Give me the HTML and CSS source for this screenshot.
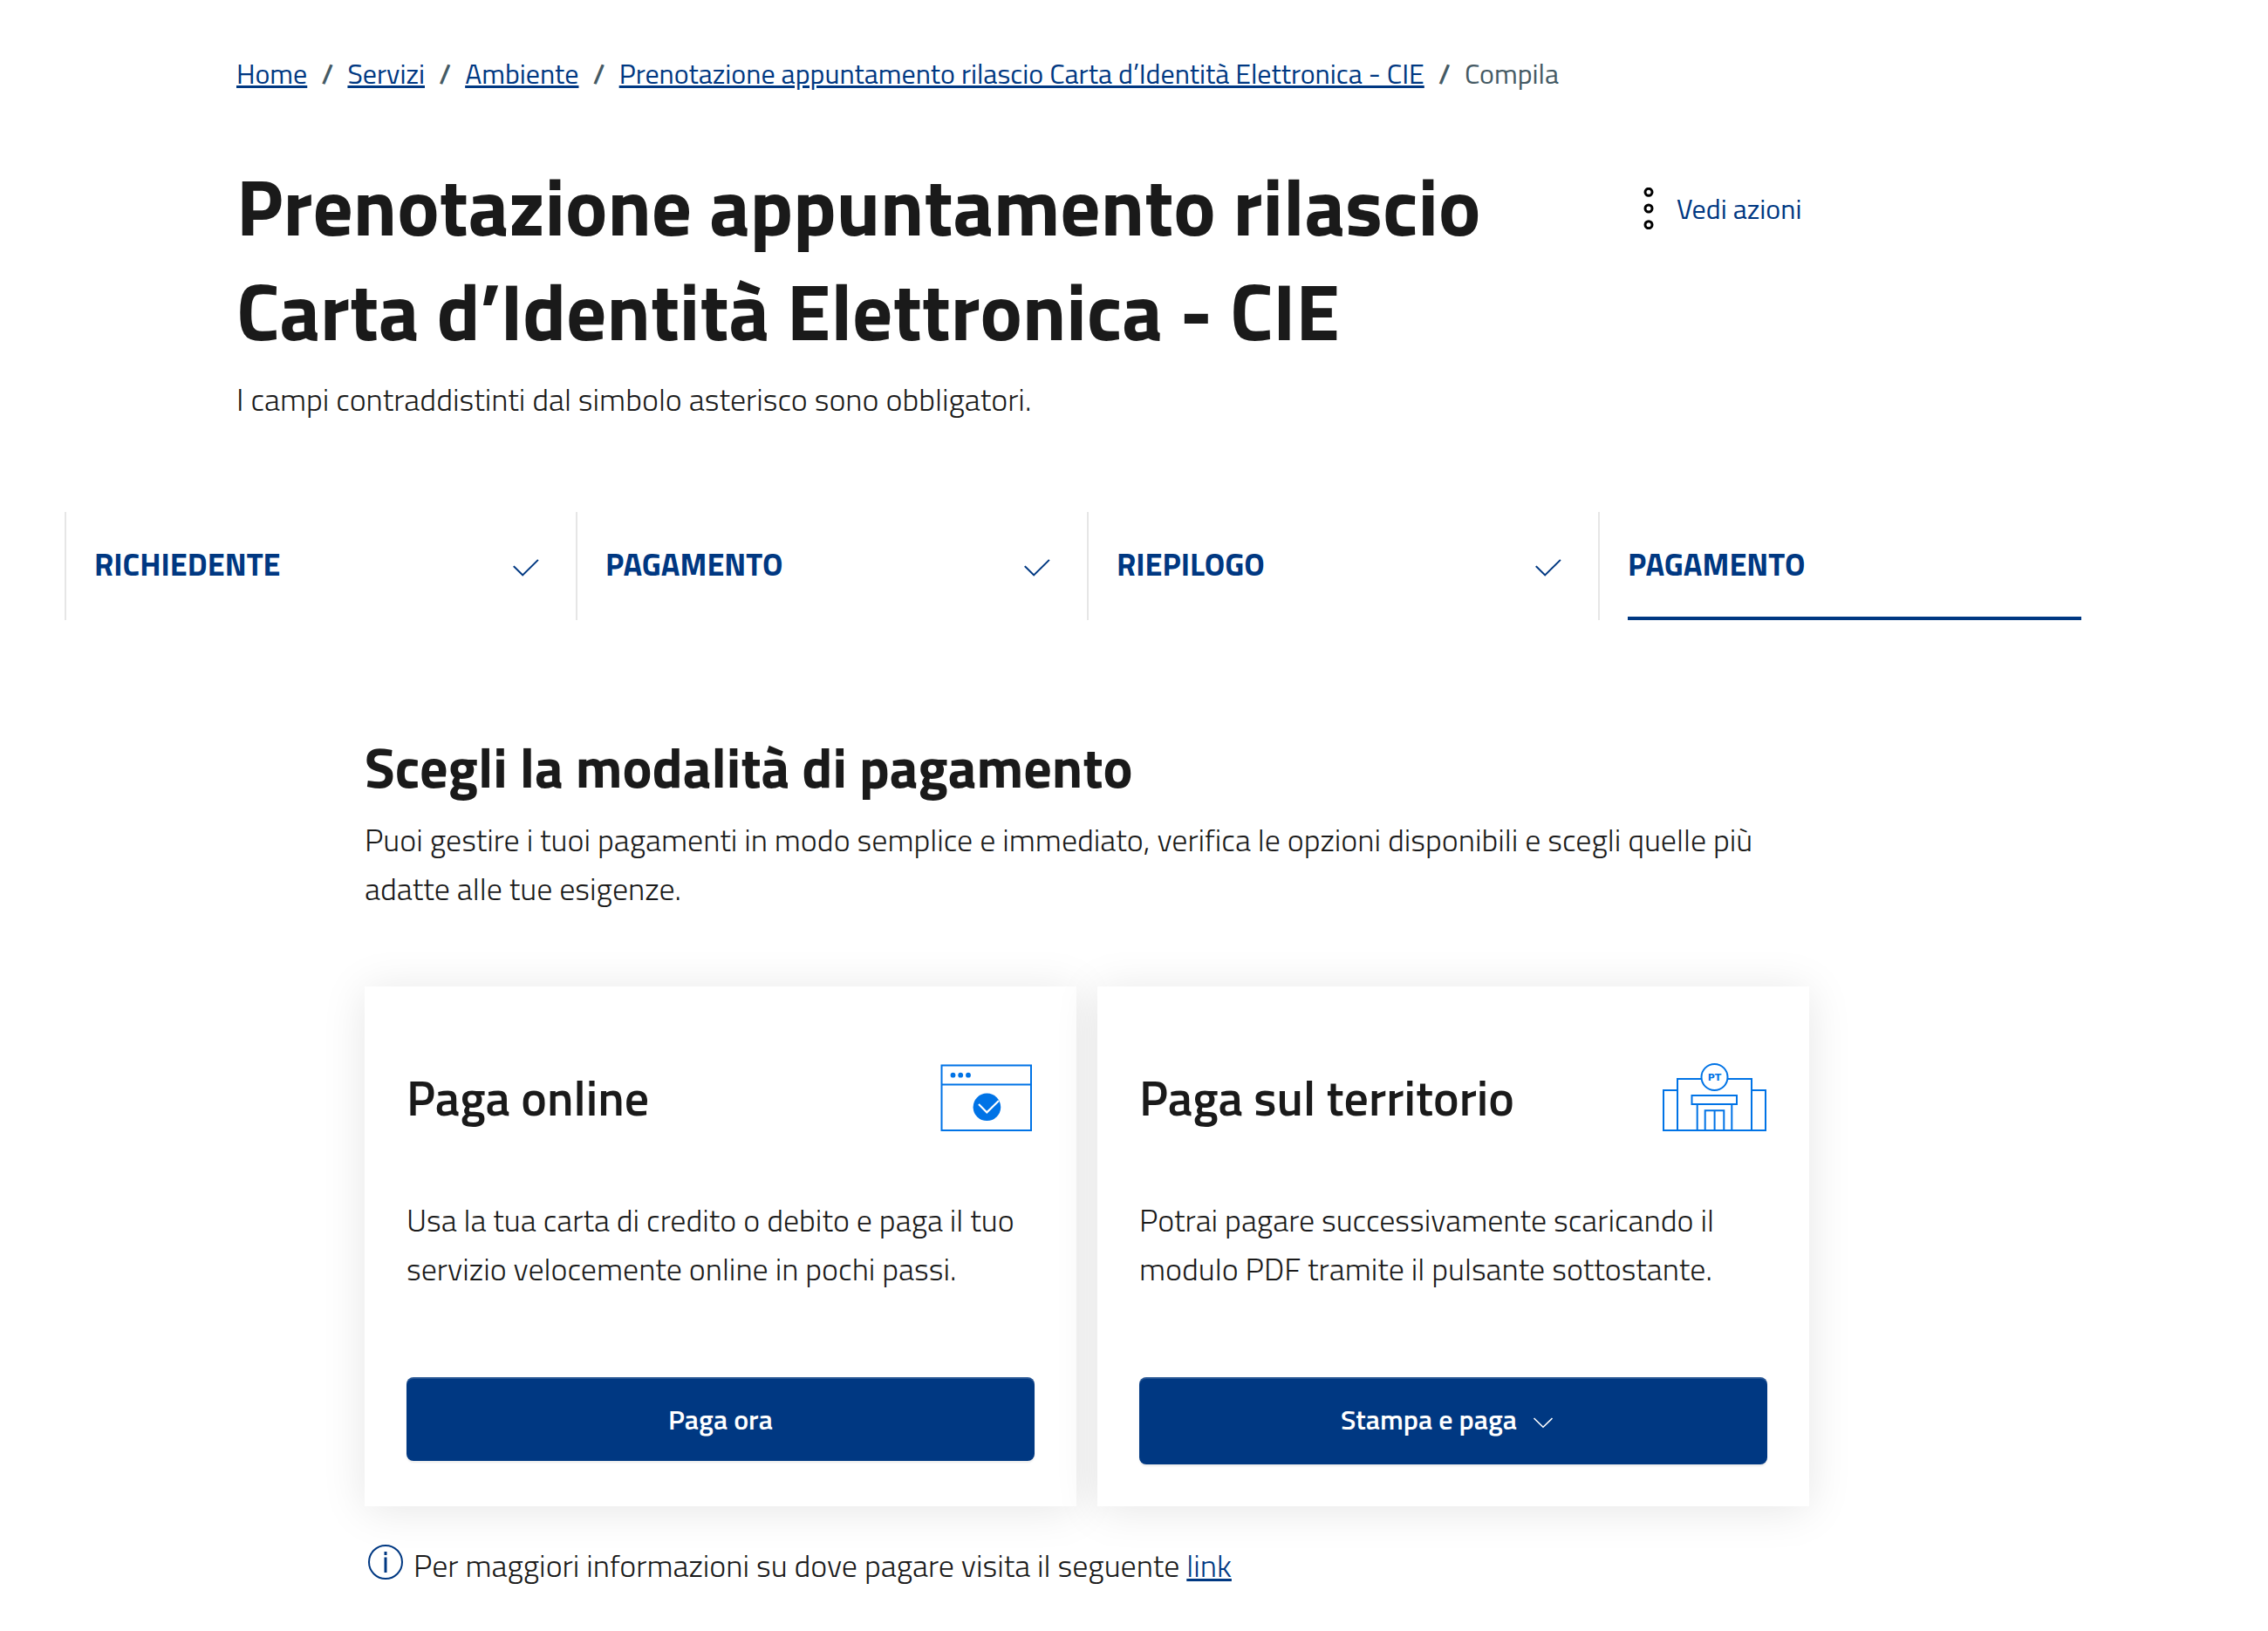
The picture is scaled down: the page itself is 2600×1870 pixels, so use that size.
FILE: index.html
```html
<!DOCTYPE html>
<html lang="it">
<head>
  <meta charset="utf-8">
  <meta name="viewport" content="width=device-width, initial-scale=1">
  <title>Prenotazione appuntamento rilascio Carta d’Identità Elettronica - CIE</title>
  <link rel="stylesheet" href="styles.css">
</head>
<body>
  <header class="intro">
    <nav aria-label="Percorso di navigazione">
      <ol class="breadcrumb">
        <li class="crumb"><a class="link" href="#">Home</a></li>
        <li class="crumb"><a class="link" href="#">Servizi</a></li>
        <li class="crumb"><a class="link" href="#">Ambiente</a></li>
        <li class="crumb"><a class="link" href="#">Prenotazione appuntamento rilascio Carta d’Identità Elettronica - CIE</a></li>
        <li class="crumb crumb-current" aria-current="page">Compila</li>
      </ol>
    </nav>
    <div class="heading">
      <div class="heading-text">
        <h1 class="title">Prenotazione appuntamento rilascio Carta d’Identità Elettronica - CIE</h1>
        <p class="text">I campi contraddistinti dal simbolo asterisco sono obbligatori.</p>
      </div>
      <button class="actions" type="button">
        <svg class="icon" viewBox="0 0 48 48" aria-hidden="true">
          <g fill="none" stroke="#000" stroke-width="3">
            <circle cx="24" cy="5.3" r="4"/><circle cx="24" cy="24" r="4"/><circle cx="24" cy="42.7" r="4"/>
          </g>
        </svg>
        <span>Vedi azioni</span>
      </button>
    </div>
  </header>

  <ol class="stepper">
    <li class="step">
      <span>RICHIEDENTE</span>
      <svg class="icon" viewBox="0 0 24 24" role="img" aria-label="Completato"><path fill="#003882" d="M9.6 16.9 4 11.4l.8-.7 4.8 4.8 8.5-8.4.7.7-9.2 9.1z"/></svg>
    </li>
    <li class="step">
      <span>PAGAMENTO</span>
      <svg class="icon" viewBox="0 0 24 24" role="img" aria-label="Completato"><path fill="#003882" d="M9.6 16.9 4 11.4l.8-.7 4.8 4.8 8.5-8.4.7.7-9.2 9.1z"/></svg>
    </li>
    <li class="step">
      <span>RIEPILOGO</span>
      <svg class="icon" viewBox="0 0 24 24" role="img" aria-label="Completato"><path fill="#003882" d="M9.6 16.9 4 11.4l.8-.7 4.8 4.8 8.5-8.4.7.7-9.2 9.1z"/></svg>
    </li>
    <li class="step step-active" aria-current="step">
      <span>PAGAMENTO</span>
    </li>
  </ol>

  <main class="payment">
    <h2 class="section-title">Scegli la modalità di pagamento</h2>
    <p class="text">Puoi gestire i tuoi pagamenti in modo semplice e immediato, verifica le opzioni disponibili e scegli quelle più adatte alle tue esigenze.</p>

    <div class="cards">
      <article class="card">
        <div class="card-head">
          <h3 class="card-title">Paga online</h3>
          <svg class="picture" viewBox="0 0 120 80" aria-hidden="true">
            <g fill="none" stroke="#0073e6" stroke-width="2">
              <rect x="13.5" y="2.5" width="102.5" height="74.5"/>
              <path d="M13.5 24.5H116"/>
            </g>
            <g fill="#0073e6">
              <circle cx="26.5" cy="13.7" r="2.9"/><circle cx="35.2" cy="13.7" r="2.9"/><circle cx="44" cy="13.7" r="2.9"/>
              <circle cx="65.4" cy="50.3" r="15.8"/>
            </g>
            <path fill="none" stroke="#fff" stroke-width="2.2" d="m56 47 9.3 9.4L79 43"/>
          </svg>
        </div>
        <p class="text">Usa la tua carta di credito o debito e paga il tuo servizio velocemente online in pochi passi.</p>
        <button class="button" type="button">Paga ora</button>
      </article>

      <article class="card">
        <div class="card-head">
          <h3 class="card-title">Paga sul territorio</h3>
          <svg class="picture" viewBox="0 0 120 80" aria-hidden="true">
            <g fill="none" stroke="#0073e6" stroke-width="2">
              <path d="M17 31H1v46h117V31h-16"/>
              <path d="M44 18H17v59M75 18h27v59"/>
              <circle cx="59.5" cy="16" r="15"/>
              <rect x="33.5" y="37" width="51.5" height="10"/>
              <path d="M39.7 47v30M79.3 47v30M48.7 77V54.3h21.6V77M59.6 54.3V77"/>
            </g>
            <text class="picture-label" x="59.5" y="20" text-anchor="middle">PT</text>
          </svg>
        </div>
        <p class="text">Potrai pagare successivamente scaricando il modulo PDF tramite il pulsante sottostante.</p>
        <button class="button button-menu" type="button" aria-haspopup="true">
          <span>Stampa e paga</span>
          <svg class="icon" viewBox="0 0 48 48" aria-hidden="true"><path fill="none" stroke="#fff" stroke-width="1.6" d="M11.5 23 22 33.2 32.5 23"/></svg>
        </button>
      </article>
    </div>

    <div class="note">
      <svg class="icon" viewBox="0 0 48 48" aria-hidden="true">
        <circle cx="24" cy="24" r="19" fill="none" stroke="#003882" stroke-width="2"/>
        <path fill="#003882" d="M22.5 12h3v4h-3zM22.5 18.500h3V36h-3z"/>
      </svg>
      <p class="text">Per maggiori informazioni su dove pagare visita il seguente <a class="link" href="#">link</a></p>
    </div>
  </main>
</body>
</html>
```

FILE: styles.css
```css
*,
*::before,
*::after {
  box-sizing: border-box;
}

body {
  margin: 0;
  padding: 60px 182px 40px 74px;
  background: #fff;
  color: #1a1a1a;
  font-family: "Titillium Web", Roboto, sans-serif;
  font-size: 32px;
  line-height: 48px;
}

h1,
h2,
h3,
p,
ol {
  margin: 0;
  padding: 0;
}

ol {
  list-style: none;
}

button {
  border: 0;
  font: inherit;
  cursor: pointer;
}

.icon {
  flex: none;
  width: 48px;
  height: 48px;
}

.link {
  color: #003882;
  text-decoration: underline;
}

.text {
  font-size: 36px;
  font-weight: 300;
  line-height: 56px;
}

/* Intro */

.intro {
  padding-left: 197px;
}

.breadcrumb {
  display: flex;
  flex-wrap: wrap;
}

.crumb + .crumb::before {
  content: "/";
  padding: 0 16px;
  color: #455a64;
  font-weight: 600;
}

.crumb-current {
  color: #455a64;
}

.heading {
  display: grid;
  grid-template-columns: minmax(0, 1499px) auto;
  justify-content: start;
  align-items: start;
  column-gap: 96px;
  padding-top: 68px;
}

.title {
  margin-bottom: 14px;
  font-size: 91px;
  font-weight: 700;
  line-height: 120px;
}

.actions {
  display: flex;
  align-items: center;
  gap: 8px;
  margin-top: 39px;
  padding: 0;
  background: none;
  color: #003882;
}

/* Stepper */

.stepper {
  display: grid;
  grid-template-columns: repeat(4, 1fr);
  margin-top: 101px;
}

.step {
  display: flex;
  justify-content: space-between;
  align-items: flex-end;
  position: relative;
  padding: 32px 32px 36px;
  border-left: 2px solid #e6e6e6;
  color: #003882;
  font-size: 36px;
  font-weight: 700;
  line-height: 56px;
}

.step-active::after {
  content: "";
  position: absolute;
  right: 32px;
  bottom: 0;
  left: 32px;
  height: 4px;
  background: #003882;
}

/* Payment choice */

.payment {
  margin: 128px 344px 0;
}

.section-title {
  margin-bottom: 16px;
  font-size: 64px;
  font-weight: 700;
  line-height: 80px;
}

.cards {
  display: grid;
  grid-template-columns: repeat(2, 1fr);
  gap: 24px;
  margin-top: 84px;
}

.card {
  padding: 48px;
  background: #fff;
  box-shadow: 0 4px 48px rgba(0, 0, 0, 0.1);
}

.card-head {
  display: flex;
  justify-content: space-between;
  align-items: center;
  min-height: 160px;
  margin-bottom: 32px;
}

.card-title {
  font-size: 56px;
  font-weight: 600;
  line-height: 64px;
}

.picture {
  flex: none;
  width: 120px;
  height: 80px;
}

.picture-label {
  fill: #0073e6;
  font-family: "DejaVu Sans", sans-serif;
  font-size: 11px;
  font-weight: 700;
}

.button {
  display: flex;
  justify-content: center;
  align-items: center;
  gap: 8px;
  width: 100%;
  margin-top: 96px;
  padding: 24px;
  border-radius: 8px;
  background: #003882;
  box-shadow: inset 0 2px 0 rgba(255, 255, 255, 0.15), 0 2px 2px rgba(0, 0, 0, 0.08);
  color: #fff;
  font-weight: 600;
}

.button-menu {
  padding-bottom: 28px;
}

.note {
  display: flex;
  align-items: flex-start;
  gap: 8px;
  margin-top: 40px;
}
```
